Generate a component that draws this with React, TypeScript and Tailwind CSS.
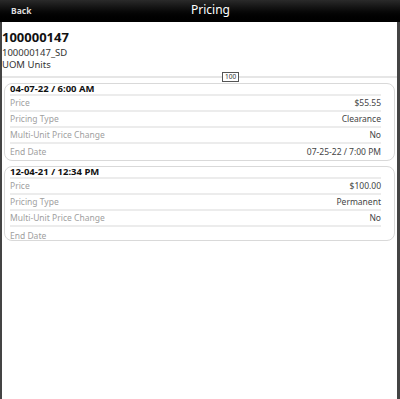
import React from "react";

type PriceEntry = {
  date: string;
  price: string;
  type: string;
  multiUnit: string;
  endDate: string;
};

const entries: PriceEntry[] = [
  {
    date: "04-07-22 / 6:00 AM",
    price: "$55.55",
    type: "Clearance",
    multiUnit: "No",
    endDate: "07-25-22 / 7:00 PM",
  },
  {
    date: "12-04-21 / 12:34 PM",
    price: "$100.00",
    type: "Permanent",
    multiUnit: "No",
    endDate: "",
  },
];

function Row({ label, value, last }: { label: string; value: string; last?: boolean }) {
  // empty values collapse the row a little, like the original list
  const height = last && !value ? "h-[13px] items-end" : "h-[16px] items-center";
  return (
    <div
      className={`flex justify-between ${height} ${
        last ? "" : "border-b-2 border-[#ececec]"
      }`}
    >
      <span className="text-[#a0a0a0]">{label}</span>
      <span className="text-[#444]">{value}</span>
    </div>
  );
}

function PriceCard({ entry }: { entry: PriceEntry }) {
  return (
    <div className="rounded-[8px] border border-[#d9d9d9] pl-[5px] pr-[13px]">
      <div className="flex h-[12px] items-end border-b-2 border-[#ececec] text-[9.5px] font-bold leading-[11px] text-[#111]">
        {entry.date}
      </div>
      <div className="text-[8.5px] leading-none">
        <Row label="Price" value={entry.price} />
        <Row label="Pricing Type" value={entry.type} />
        <Row label="Multi-Unit Price Change" value={entry.multiUnit} />
        <Row label="End Date" value={entry.endDate} last />
      </div>
    </div>
  );
}

export default function App() {
  return (
    <div
      className="flex h-[399px] w-[400px] flex-col bg-[#444]"
      style={{ fontFamily: '"Noto Sans", "Open Sans", sans-serif' }}
    >
      <div className="relative flex h-[22px] items-center bg-gradient-to-b from-[#2a2a2a] to-black">
        <span className="pl-[11px] text-[8.5px] font-bold text-[#dcdcdc]">Back</span>
        <span className="absolute left-0 right-0 top-[1px] pl-[21px] text-center text-[12px] text-white">
          Pricing
        </span>
      </div>
      <div className="ml-[2px] mr-[3px] flex-1 bg-white">
        <div className="pt-[9px] leading-none">
          <div className="text-[13px] font-bold text-[#111]">100000147</div>
          <div className="mt-[4px] text-[9.5px] text-[#333]">100000147_SD</div>
          <div className="mt-[2px] text-[9.5px] text-[#333]">UOM Units</div>
        </div>
        <div className="relative mt-[7px] h-[2px] bg-[#e6e6e6]">
          <span className="absolute left-[220px] top-[-4px] border border-[#555] bg-white px-[2px] text-[6.5px] leading-[8px] text-[#333]">
            100
          </span>
        </div>
        <div className="flex flex-col gap-[5px] px-[2px] pt-[5px]">
          {entries.map((e) => (
            <PriceCard key={e.date} entry={e} />
          ))}
        </div>
      </div>
    </div>
  );
}
